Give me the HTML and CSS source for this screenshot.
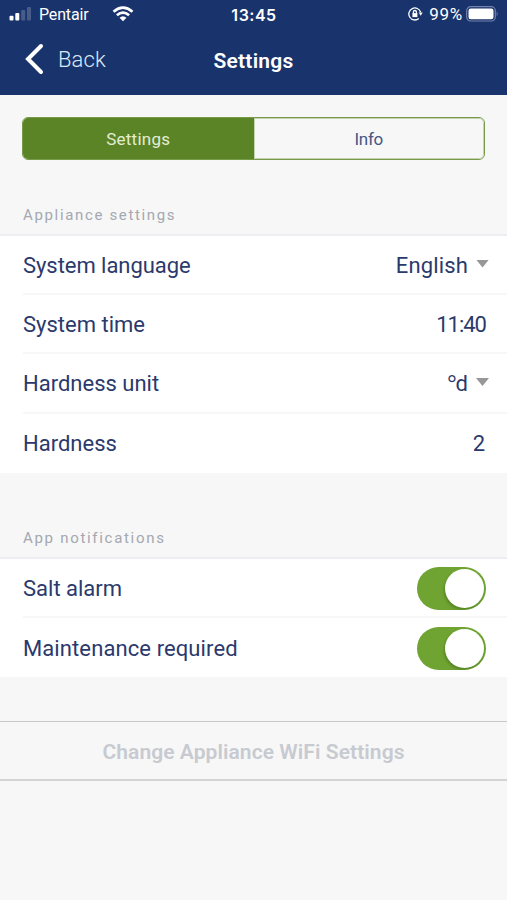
FILE: index.html
```html
<!DOCTYPE html>
<html lang="en">
<head>
<meta charset="utf-8">
<title>Settings</title>
<link rel="stylesheet" href="styles.css">
</head>
<body>
<header class="header">
  <div class="status">
    <div class="status-left">
      <svg class="signal" width="24" height="16" viewBox="0 0 24 16" fill="#fff"><rect x=".5" y="9.8" width="4" height="4.700" rx="1"/><rect x="6.300" y="7" width="4" height="7.500" rx="1"/><g opacity=".2"><rect x="12.200" y="4" width="4" height="10.500" rx="1"/><rect x="18" y="1" width="4" height="13.500" rx="1"/></g></svg>
      <span class="carrier">Pentair</span>
      <svg class="wifi" width="22" height="16" viewBox="0 0 22 16" fill="none" stroke="#fff" stroke-width="2.700"><path d="M1.500 5.700Q11-2.400 20.500 5.700M4.900 9.300Q11 4 17.100 9.300"/><path d="M7.500 11.700Q11 8.700 14.500 11.700L11 15.300Z" fill="#fff" stroke="none"/></svg>
    </div>
    <span class="clock">13:45</span>
    <div class="status-right">
      <svg class="lock" width="15" height="14" viewBox="0 0 15 14" fill="none" stroke="#fff" stroke-width="1.300"><path d="M12.600 5.300A6 6 0 1 0 10.800 11.500"/><path d="M10.700 5.600H14.700L12.700 8.700Z" fill="#fff" stroke="none"/><rect x="4.400" y="6.100" width="5" height="4" fill="#fff" stroke="none"/><path d="M5.400 6.500V5A1.500 1.500 0 0 1 8.400 5V6.500"/></svg>
      <span class="percent">99%</span>
      <svg class="battery" width="33" height="16" viewBox="0 0 33 16"><rect x=".7" y=".7" width="28.600" height="14.300" rx="4" fill="none" stroke="#7484aa" stroke-width="1.200"/><rect x="2.500" y="2.500" width="25" height="10.800" rx="2.300" fill="#fff"/><path d="M30.700 5.500Q32.700 7.900 30.700 10.300Z" fill="#7484aa"/></svg>
    </div>
  </div>
  <nav class="nav">
    <a class="back"><svg width="20" height="32" viewBox="0 0 20 32" fill="none" stroke="#fff" stroke-width="4" stroke-linecap="round" stroke-linejoin="miter"><path d="M17 3L4 16L17 29"/></svg><span class="back-text">Back</span></a>
    <h1 class="title">Settings</h1>
  </nav>
</header>
<main>
  <div class="tabs"><div class="tab active"><span>Settings</span></div><div class="tab"><span class="info">Info</span></div></div>
  <h2 class="heading appliance">Appliance settings</h2>
  <section class="list">
    <div class="row"><span class="label language">System language</span><span class="value english">English</span><i class="caret"></i></div>
    <div class="row"><span class="label time">System time</span><span class="value hour">11:40</span></div>
    <div class="row"><span class="label unit">Hardness unit</span><span class="value"><span class="degree">°</span>d</span><i class="caret"></i></div>
    <div class="row"><span class="label hardness">Hardness</span><span class="value">2</span></div>
  </section>
  <h2 class="heading notifications">App notifications</h2>
  <section class="list">
    <div class="row"><span class="label salt">Salt alarm</span><span class="switch"><i class="knob"></i></span></div>
    <div class="row"><span class="label maintenance">Maintenance required</span><span class="switch"><i class="knob"></i></span></div>
  </section>
  <div class="action"><span>Change Appliance WiFi Settings</span></div>
</main>
</body>
</html>
```
FILE: styles.css
```css
* { box-sizing: border-box; }
body { margin: 0; height: 900px; overflow: hidden; background: #f7f7f7; color: #2b396c; font-family: Roboto, "Liberation Sans", sans-serif; }
.header { height: 95px; background: #19336c; color: #fff; }
.status { height: 29px; display: grid; grid-template-columns: 1fr auto 1fr; align-items: center; padding: 0 8px 0 9px; }
.status-left, .status-right { display: flex; align-items: center; }
.status-right { justify-content: flex-end; padding-bottom: 1px; }
.signal { margin-top: -1px; }
.carrier { margin-left: 6px; width: 50px; font-size: 16px; letter-spacing: -.15px; }
.wifi { margin-left: 23px; margin-top: -2px; }
.clock { font-family: Inter, sans-serif; font-size: 16px; font-weight: 600; letter-spacing: .5px; }
.percent { margin: 0 3px 0 6px; font-size: 17px; letter-spacing: .7px; }
.lock { margin-right: 0; }
.nav { height: 66px; display: grid; grid-template-columns: 1fr auto 1fr; align-items: center; }
.back { display: flex; align-items: center; padding: 0 0 7px 24px; gap: 14px; font-size: 22px; font-weight: 300; color: #d9eafa; }
.back-text { padding-top: 2px; letter-spacing: .1px; }
.title { margin: 0 0 2px; font-size: 21px; font-weight: 600; letter-spacing: .25px; }
.tabs { display: flex; height: 43px; margin: 22px 22px 0; border: 1px solid #789b49; border-radius: 6px; overflow: hidden; }
.tab { flex: 1; display: flex; align-items: center; justify-content: center; font-size: 17px; letter-spacing: .25px; color: #455687; box-shadow: inset 0 0 0 1px #c5d3b2; border-radius: 0 5px 5px 0; }
.active { background: #5b8427; color: #e3edd5; box-shadow: none; border-radius: 0; }
.info { letter-spacing: -.3px; }
.heading { margin: 0; padding-left: 23px; font-size: 15px; line-height: 20px; font-weight: 400; letter-spacing: 1.65px; color: #a4a8b0; }
.appliance { padding-top: 45px; height: 74px; }
.notifications { padding-top: 55px; height: 84px; letter-spacing: 1.7px; }
.list { background: #fff; border-top: 2px solid #eceef1; }
.row { height: 59.200px; margin-left: 23px; padding: 2px 22px 0 0; display: flex; align-items: center; border-bottom: 2px solid #f6f7f9; font-size: 22px; }
.row:last-child { border-bottom: 0; padding-top: 1px; }
.label { flex: 1; white-space: nowrap; }
.language { letter-spacing: -.05px; }
.maintenance { letter-spacing: .1px; }
.english { letter-spacing: .15px; }
.hour { letter-spacing: -1px; padding-bottom: 1px; margin-right: -1px; }
.degree { font-size: 30px; line-height: 22px; vertical-align: -5px; letter-spacing: -2px; font-weight: 300; }
.caret { flex: none; width: 13px; height: 8px; margin: -4px -4px 0 8px; background: #979797; clip-path: polygon(0 0, 100% 0, 50% 100%); }
.switch { width: 69px; height: 43px; margin-right: -.5px; border-radius: 22px; background: #70a432; padding: 2px; display: flex; justify-content: flex-end; overflow: hidden; }
.knob { width: 39px; height: 39px; border-radius: 50%; background: #fff; box-shadow: -1px 2px 3px #345f1570; }
.action { height: 60px; margin-top: 44px; padding-top: 2px; border-top: 1px solid #c7c8ca; border-bottom: 2px solid #d3d4d5; display: flex; align-items: center; justify-content: center; font-size: 21px; font-weight: 600; letter-spacing: .07px; color: #c7cad0; }
```
